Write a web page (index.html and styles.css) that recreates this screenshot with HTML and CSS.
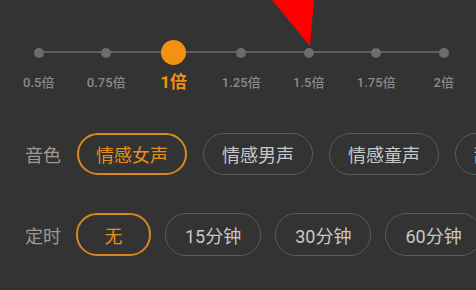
FILE: index.html
```html
<!DOCTYPE html>
<html lang="zh">
<head>
<meta charset="utf-8">
<link rel="stylesheet" href="styles.css">
</head>
<body>
<div class="panel">
  <div class="speed">
    <div class="stop"><span class="dot"></span><span class="lbl">0.5倍</span></div>
    <div class="stop"><span class="dot"></span><span class="lbl">0.75倍</span></div>
    <div class="stop active"><span class="dot"></span><span class="lbl">1倍</span></div>
    <div class="stop"><span class="dot"></span><span class="lbl">1.25倍</span></div>
    <div class="stop"><span class="dot"></span><span class="lbl">1.5倍</span></div>
    <div class="stop"><span class="dot"></span><span class="lbl">1.75倍</span></div>
    <div class="stop"><span class="dot"></span><span class="lbl">2倍</span></div>
  </div>
  <div class="row voice">
    <span class="label">音色</span>
    <span class="pill on">情感女声</span>
    <span class="pill">情感男声</span>
    <span class="pill">情感童声</span>
    <span class="pill">甜美女声</span>
  </div>
  <div class="row timer">
    <span class="label">定时</span>
    <span class="pill on narrow">无</span>
    <span class="pill">15分钟</span>
    <span class="pill">30分钟</span>
    <span class="pill">60分钟</span>
  </div>
  <svg class="pointer" width="476" height="60" viewBox="0 0 476 60">
    <path d="M272 0 L314 0 L310 46 Q290 22 272 0 Z" fill="#ff0000"/>
  </svg>
</div>
</body>
</html>
```

FILE: styles.css
```css
html, body {
  margin: 0;
  padding: 0;
  background: #333333;
  overflow: hidden;
}
.panel {
  position: relative;
  width: 476px;
  height: 290px;
  overflow: hidden;
  font-family: Roboto, "Noto Sans CJK SC", sans-serif;
}
.speed {
  position: relative;
  display: grid;
  grid-template-columns: repeat(7, 67.5px);
  padding: 40px 0 0 5px;
}
.speed::before {
  content: "";
  position: absolute;
  left: 39px;
  width: 405px;
  top: 51px;
  height: 2px;
  background: #5d5d5d;
}
.stop {
  position: relative;
  display: flex;
  flex-direction: column;
  align-items: center;
}
.dot {
  height: 25px;
  width: 25px;
  display: flex;
  align-items: center;
  justify-content: center;
}
.dot::after {
  content: "";
  width: 10px;
  height: 10px;
  border-radius: 50%;
  background: #6c6c6c;
}
.active .dot::after {
  width: 25px;
  height: 25px;
  background: #f39110;
}
.lbl {
  margin-top: 9px;
  height: 18px;
  line-height: 18px;
  font-size: 13px;
  font-weight: 500;
  color: #8a8a8a;
  white-space: nowrap;
}
.active .lbl {
  font-size: 17px;
  font-weight: 700;
  color: #f0900e;
  line-height: 16px;
}
.row {
  display: flex;
  align-items: center;
  white-space: nowrap;
  padding-left: 25px;
}
.voice {
  margin-top: 41px;
  gap: 16px;
}
.timer {
  margin-top: 38px;
  gap: 14px;
}
.label {
  font-size: 18px;
  color: #9a9a9a;
  width: 36px;
  flex: none;
}
.timer .label {
  margin-right: 1px;
}
.pill {
  flex: none;
  box-sizing: border-box;
  height: 42px;
  min-width: 75px;
  padding: 0 18px;
  border: 1.5px solid #5a5a5a;
  border-radius: 21px;
  display: flex;
  align-items: center;
  justify-content: center;
  font-size: 18px;
  color: #c8c8c8;
}
.voice .pill {
  width: 110px;
  padding: 0;
}
.timer .pill {
  height: 43px;
  padding: 0 19px;
}
.pill.on {
  border: 2px solid #d8871c;
  color: #e68e1c;
}
.pointer {
  position: absolute;
  left: 0;
  top: 0;
}
```
